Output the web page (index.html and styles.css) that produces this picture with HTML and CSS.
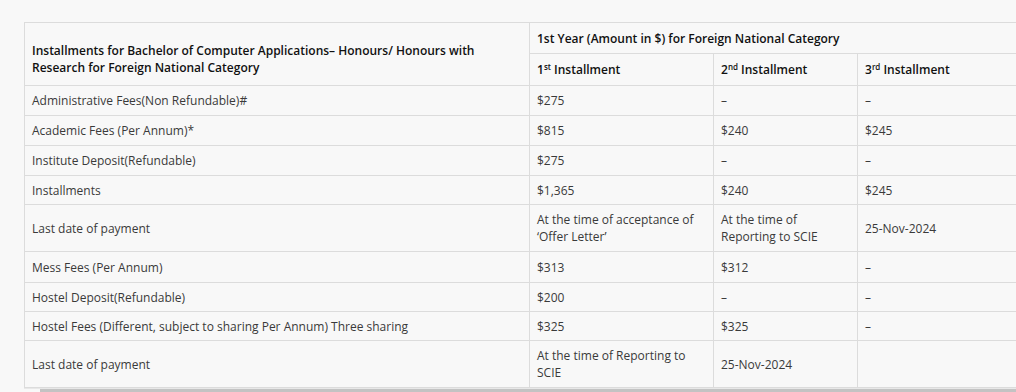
FILE: index.html
```html
<!DOCTYPE html>
<html>
<head>
<meta charset="utf-8">
<link rel="stylesheet" href="styles.css">
</head>
<body>
<div class="wrap">
<table class="fees">
  <colgroup>
    <col class="c1"><col class="c2"><col class="c3"><col class="c4">
  </colgroup>
  <thead>
    <tr class="head-top">
      <th rowspan="2" class="main-head">Installments for Bachelor of Computer Applications– Honours/ Honours with Research for Foreign National Category</th>
      <th colspan="3">1st Year (Amount in $) for Foreign National Category</th>
    </tr>
    <tr class="head-sub">
      <th>1<sup>st</sup> Installment</th>
      <th>2<sup>nd</sup> Installment</th>
      <th>3<sup>rd</sup> Installment</th>
    </tr>
  </thead>
  <tbody>
    <tr><td>Administrative Fees(Non Refundable)#</td><td>$275</td><td>–</td><td>–</td></tr>
    <tr><td>Academic Fees (Per Annum)*</td><td>$815</td><td>$240</td><td>$245</td></tr>
    <tr><td>Institute Deposit(Refundable)</td><td>$275</td><td>–</td><td>–</td></tr>
    <tr class="tight"><td>Installments</td><td>$1,365</td><td>$240</td><td>$245</td></tr>
    <tr><td>Last date of payment</td><td>At the time of acceptance of ‘Offer Letter’</td><td>At the time of Reporting to SCIE</td><td>25-Nov-2024</td></tr>
    <tr class="tall"><td>Mess Fees (Per Annum)</td><td>$313</td><td>$312</td><td>–</td></tr>
    <tr class="tight"><td>Hostel Deposit(Refundable)</td><td>$200</td><td>–</td><td>–</td></tr>
    <tr class="tight"><td>Hostel Fees (Different, subject to sharing Per Annum) Three sharing</td><td>$325</td><td>$325</td><td>–</td></tr>
    <tr><td>Last date of payment</td><td>At the time of Reporting to SCIE</td><td>25-Nov-2024</td><td></td></tr>
  </tbody>
</table>
<div class="scrollbar"><div class="thumb"></div></div>
</div>
</body>
</html>
```
FILE: styles.css
```css
html, body {
  margin: 0;
  padding: 0;
  background: #f8f8f8;
  overflow: hidden;
}
body {
  padding: 22px 0 0 24px;
  font-family: "Open Sans", "Liberation Sans", sans-serif;
}
.wrap {
  overflow: hidden;
  width: 992px;
}
.scrollbar {
  height: 5px;
  padding-left: 16px;
  border-top: 1px solid #e8e8e8;
}
.thumb {
  height: 4px;
  background: #c3c3c3;
}
.fees {
  border-collapse: collapse;
  table-layout: fixed;
  width: 1200px;
  font-size: 12px;
  color: #3a3a3a;
  background: #f8f8f8;
}
.c1 { width: 505px; }
.c2 { width: 184px; }
.c3 { width: 144px; }
.c4 { width: 367px; }
.fees th, .fees td {
  border: 1px solid #dcdcdc;
  text-align: left;
  line-height: 17px;
}
.fees th {
  font-weight: 600;
  color: #111;
  padding: 7px 7px 6px;
  vertical-align: middle;
}
.head-sub th {
  padding: 7px 7px 7px;
}
.fees th.main-head {
  vertical-align: bottom;
  padding-bottom: 9px;
}
.fees td {
  padding: 6px 7px;
  vertical-align: middle;
}
.fees .tight td {
  padding: 6px 7px 5px;
}
.fees .tall td {
  padding: 7px 7px 6px;
}
.fees sup {
  font-size: 8px;
  line-height: 0;
  vertical-align: 4px;
}
```
